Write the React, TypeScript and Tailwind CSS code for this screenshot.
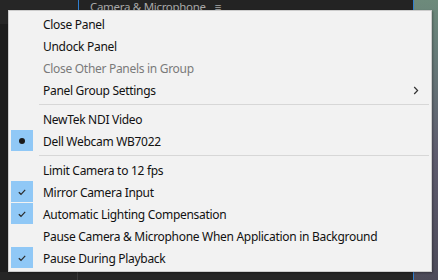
import React from 'react';

type Mark = 'check' | 'dot' | null;

interface Item {
  label: string;
  mark?: Mark;
  disabled?: boolean;
  submenu?: boolean;
}

const groups: Item[][] = [
  [
    { label: 'Close Panel' },
    { label: 'Undock Panel' },
    { label: 'Close Other Panels in Group', disabled: true },
    { label: 'Panel Group Settings', submenu: true },
  ],
  [{ label: 'NewTek NDI Video' }, { label: 'Dell Webcam WB7022', mark: 'dot' }],
  [
    { label: 'Limit Camera to 12 fps' },
    { label: 'Mirror Camera Input', mark: 'check' },
    { label: 'Automatic Lighting Compensation', mark: 'check' },
    { label: 'Pause Camera & Microphone When Application in Background' },
    { label: 'Pause During Playback', mark: 'check' },
  ],
];

function MenuRow({ item }: { item: Item }) {
  return (
    <div className="flex items-center h-[22px]">
      {/* Mark column */}
      <div className="w-[22px] ml-[2px] h-[21px] self-start flex items-center justify-center">
        {item.mark && (
          <div className="w-[22px] h-[21px] bg-[#90c8f6] flex items-center justify-center">
            {item.mark === 'check' ? (
              <svg width="10" height="8" viewBox="0 0 10 8">
                <path d="M1.8 4.2 L4 6.3 L8.2 1.8" fill="none" stroke="#2b2b2b" strokeWidth="1.2" />
              </svg>
            ) : (
              <div className="w-[6px] h-[6px] rounded-full bg-[#1a1a1a]" />
            )}
          </div>
        )}
      </div>

      <span
        className={`ml-[10px] pt-px flex-1 whitespace-nowrap tracking-[-0.3px] ${
          item.disabled ? 'text-[#7a7a7a]' : 'text-[#111111]'
        }`}
      >
        {item.label}
      </span>

      {item.submenu && (
        <svg className="mr-[12px]" width="6" height="9" viewBox="0 0 6 9">
          <path d="M1.2 1 L4.6 4.5 L1.2 8" fill="none" stroke="#333333" strokeWidth="1.2" />
        </svg>
      )}
    </div>
  );
}

export default function App() {
  return (
    <div
      className="relative w-[438px] h-[280px] overflow-hidden bg-[#1d1d1d] flex"
      style={{ fontFamily: '"Segoe UI", "Noto Sans", "Open Sans", sans-serif' }}
    >
      {/* Background workspace */}
      <div className="flex-1 flex flex-col">
        <div className="h-[24px] flex bg-[#232323]">
          <div className="w-[78px] bg-[#262626]" />
          <div className="w-px bg-[#2f7fd0]" />
          <div className="ml-[11px] mt-[-1px] leading-[16px] text-[11.5px] tracking-[-0.3px] text-[#a8a8a8] flex gap-[9px]">
            <span>Camera &amp; Microphone</span>
            <span>≡</span>
          </div>
        </div>
        <div className="flex-1" />
        <div className="h-[8px] flex bg-[#262626]">
          <div className="w-[77px]" />
          <div className="w-px bg-[#3a3a3a]" />
        </div>
      </div>
      <div className="w-[25px] flex border-l border-[#2f7fd0]">
        <div className="flex-1 bg-[linear-gradient(180deg,#6d8a7b_0%,#667a78_20%,#5e5c6e_55%,#4c4a58_100%)]" />
      </div>

      {/* Context menu */}
      <div className="absolute left-[8px] top-[10px] w-[424px] h-[262px] bg-[#f2f2f2] border border-[#cccccc] pt-[2px] pb-[2px] text-[12px] shadow-[1px_1px_2px_rgba(0,0,0,0.3)]">
        {groups.map((group, gi) => (
          <div key={gi}>
            {gi > 0 && (
              <div className="h-[7px] pt-[3px] pl-[30px] pr-[2px]">
                <div className="h-px bg-[#d7d7d7]" />
              </div>
            )}
            {group.map((item) => (
              <MenuRow key={item.label} item={item} />
            ))}
          </div>
        ))}
      </div>
    </div>
  );
}
